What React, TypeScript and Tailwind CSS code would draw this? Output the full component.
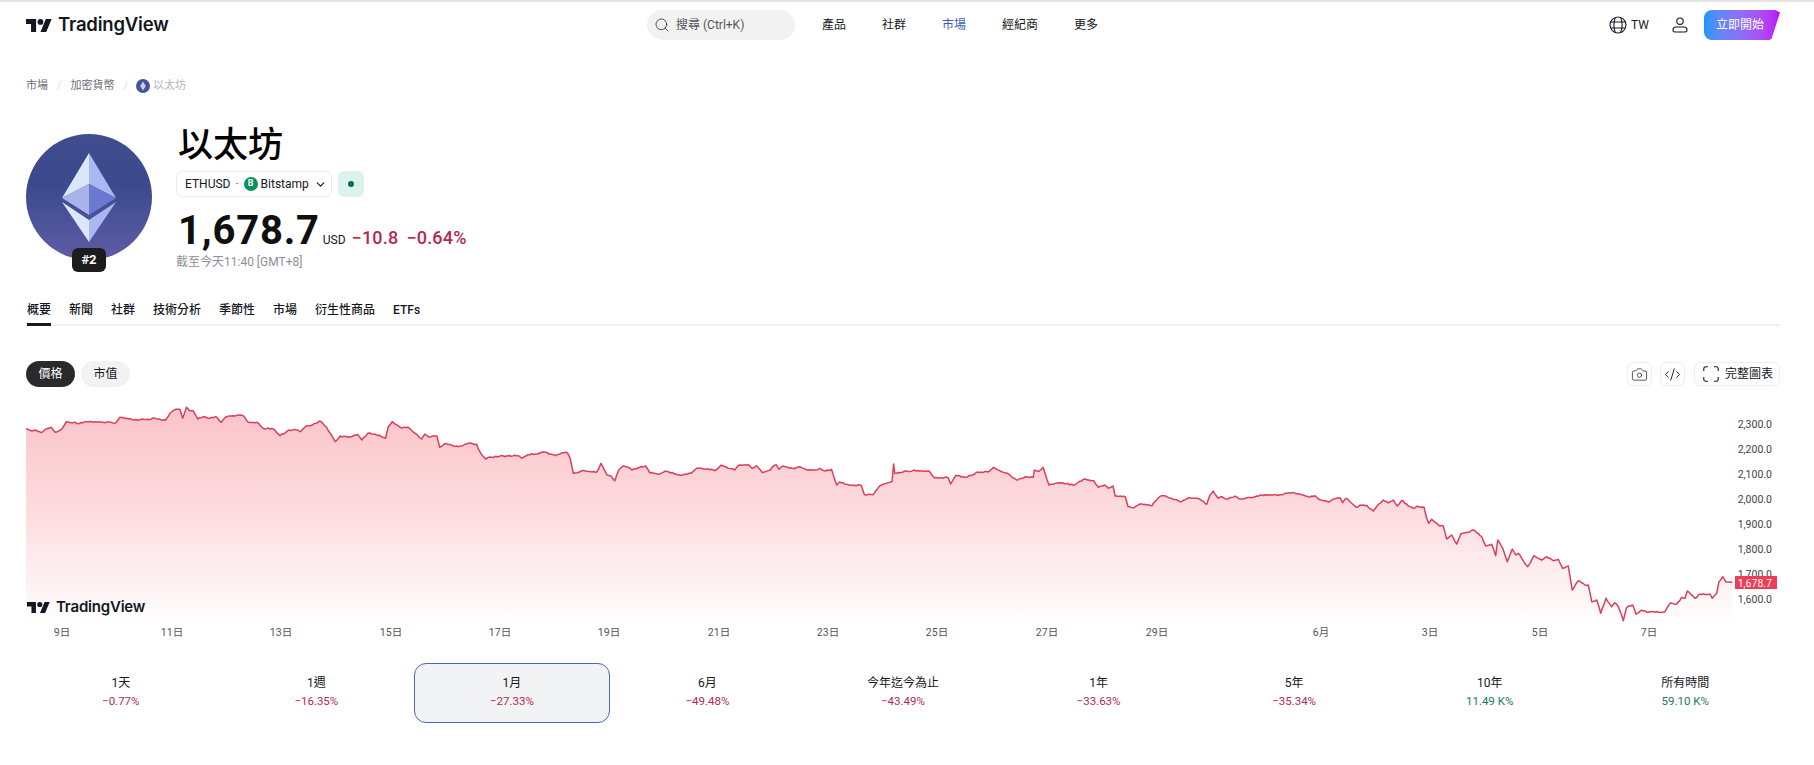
import { Camera, ChevronDown, CodeXml, Search } from 'lucide-react';

const sans = "font-['Roboto','Noto_Sans_CJK_TC',sans-serif]";

// traced from the reference: [offset x, x scale, offset y, points]
const traces: [number, number, number, number[]][] = [
  [0, 2.529, 390, [66,116,78,122,90,120,105,128,115,118,130,112,140,127,155,118,168,95,178,98,190,97,200,101,215,95,240,95,260,97,280,97,290,100,303,82,320,85,348,91,360,87,395,86,418,91,430,70,440,60,455,58,462,85,472,52,480,62,488,62,500,87,515,80,530,85,545,80,560,97,570,82,590,77,615,77,628,97,650,97,665,115,690,116,708,137,730,120,750,119,760,125,775,108,790,105,808,93,825,110,835,130,848,155,860,138,880,142,905,133,915,150,930,130,950,133,975,145,982,110,992,95,1000,103,1012,112,1035,114,1050,130,1066,147,1075,132,1085,141,1105,138,1112,172,1125,161,1160,170,1185,160,1205,163,1215,188,1228,207,1240,201,1280,198,1310,197,1320,205,1335,194,1355,192,1375,186,1405,197,1425,188,1435,188,1442,205,1450,250,1470,243,1510,245,1520,220,1535,255,1545,258,1555,272,1565,240]],
  [620, 2.529, 390, [8,228,20,232,30,240,50,232,65,228,75,248,100,252,115,243,150,255,180,250,195,234,230,238,240,242,255,226,290,240,300,226,325,224,335,235,345,227,360,248,380,240,385,232,395,224,402,238,410,229,440,236,455,230,475,240,495,240,505,235,520,243,535,238,548,285,555,276,580,286,610,286,618,314,640,314,655,290,675,280,688,275,692,222,695,250,720,243,780,242,795,263,830,263,836,282,850,256,875,262,905,246,930,246,945,232,965,245,985,254,1003,270,1025,260,1045,262,1048,240,1060,244,1070,232,1085,285,1110,278,1150,285,1172,268,1198,272,1210,292,1225,285,1235,295,1247,288,1252,318,1278,320,1285,350,1300,353,1315,342,1345,347,1365,320,1375,317,1395,325,1420,335,1440,323,1460,325]],
  [1200, 3, 400, [0,298,20,313,30,285,40,273,55,295,65,290,80,297,105,289,120,297,160,292,185,285,240,284,275,278,310,285,330,291,345,287,355,297,385,306,400,297,420,293,428,308,438,295,470,322,480,315,500,316,520,333,535,313,550,300,565,309,580,300,592,318,605,301,625,318,640,325,650,319,672,322,680,355,686,370,695,358,720,378,730,378,740,417,755,405,770,432,782,402,800,397,820,390,845,410,857,438,875,433,887,467,893,420,908,445,922,485,937,447,948,465,955,460,983,500,1002,467,1025,480,1040,470,1060,482,1075,478]],
  [1560, 3, 350, [8,655,25,648,37,720,55,692,75,705,85,705,95,755,110,750,122,790,138,745,155,770,165,758,175,770,190,812,200,772,218,765,228,792,245,780,265,787,300,787,315,785,330,760,350,762,365,742,375,745,382,723,405,745,420,732,450,732,457,745,470,730,477,695,488,680,497,695,517,697]],
];

const rawPts: [number, number][] = [];
traces.forEach(([ox, sx, oy, pts]) => {
  for (let i = 0; i < pts.length; i += 2) rawPts.push([ox + pts[i] / sx, oy + pts[i + 1] / 3]);
});

// fill long segments with a little tick noise so the line reads like price data
const linePts: string[] = [];
rawPts.forEach(([x, y], i) => {
  linePts.push(`${x.toFixed(1)},${y.toFixed(1)}`);
  const next = rawPts[i + 1];
  if (!next) return;
  const steps = Math.floor((next[0] - x) / 1.6);
  for (let s = 1; s < steps; s++) {
    const t = s / steps;
    const px = x + (next[0] - x) * t;
    const noise = Math.sin(px * 12.9898) * 43758.5453;
    const jitter = (noise - Math.floor(noise) - 0.5) * 1.3;
    linePts.push(`${px.toFixed(1)},${(y + (next[1] - y) * t + jitter).toFixed(1)}`);
  }
});
const linePath = linePts.join(' ');
const areaPath = `26,625 ${linePath} 1732,625`;

const priceTicks = [
  ['2,300.0', 428], ['2,200.0', 453], ['2,100.0', 478], ['2,000.0', 503],
  ['1,900.0', 528], ['1,800.0', 553], ['1,700.0', 578], ['1,600.0', 603],
] as const;

const timeTicks = [
  ['9日', 62], ['11日', 172], ['13日', 281], ['15日', 391], ['17日', 500], ['19日', 609], ['21日', 719],
  ['23日', 828], ['25日', 937], ['27日', 1047], ['29日', 1157], ['6月', 1321], ['3日', 1430], ['5日', 1540], ['7日', 1649],
] as const;

const ranges = [
  { label: '1天', value: '−0.77%' },
  { label: '1週', value: '−16.35%' },
  { label: '1月', value: '−27.33%', active: true },
  { label: '6月', value: '−49.48%' },
  { label: '今年迄今為止', value: '−43.49%' },
  { label: '1年', value: '−33.63%' },
  { label: '5年', value: '−35.34%' },
  { label: '10年', value: '11.49 K%', up: true },
  { label: '所有時間', value: '59.10 K%', up: true },
];

function TvMark({ className }: { className: string }) {
  return (
    <svg viewBox="0 4 36 18" className={className} fill="#131722">
      <path d="M14 22H7V11H0V4h14v18zM28 22h-8l7.5-18h8L28 22z" />
      <circle cx="20" cy="8" r="4" />
    </svg>
  );
}

function EthLogo() {
  return (
    <svg viewBox="0 0 126 126" className="w-[126px] h-[126px]">
      <defs>
        <linearGradient id="ethbg" x1="0" y1="0" x2="0" y2="1">
          <stop offset="0" stopColor="#404d8e" />
          <stop offset="0.4" stopColor="#3b4a8d" />
          <stop offset="1" stopColor="#5f5ca6" />
        </linearGradient>
      </defs>
      <circle cx="63" cy="63" r="63" fill="url(#ethbg)" />
      <path d="M63 19 36 64 63 50Z" fill="#dce6fb" />
      <path d="M63 19 90 64 63 50Z" fill="#a9b9ef" />
      <path d="M36 64 63 50 63 81Z" fill="#a8b4ea" />
      <path d="M90 64 63 50 63 81Z" fill="#6b7ad1" />
      <path d="M36 68 63 108 63 86Z" fill="#dce6fb" />
      <path d="M90 68 63 108 63 86Z" fill="#a9b9ef" />
    </svg>
  );
}

function GlobeIcon() {
  return (
    <svg viewBox="0 0 18 18" className="w-[18px] h-[18px]" fill="none" stroke="#131722" strokeWidth="1.1">
      <circle cx="9" cy="9" r="8" />
      <path d="M6.3 1.6C4.6 6 4.6 12 6.3 16.4M11.7 1.6c1.7 4.4 1.7 10.4 0 14.8M1.8 6h14.4M1.8 12h14.4" />
    </svg>
  );
}

function UserIcon() {
  return (
    <svg viewBox="0 0 16 16" className="w-[16px] h-[16px]" fill="none" stroke="#131722" strokeWidth="1.1">
      <circle cx="8" cy="4.2" r="3.2" />
      <path d="M4 10h8a3 3 0 0 1 3 3v.2a1.8 1.8 0 0 1-1.8 1.8H2.8A1.8 1.8 0 0 1 1 13.2V13a3 3 0 0 1 3-3Z" />
    </svg>
  );
}

function FullIcon() {
  return (
    <svg viewBox="0 0 16 16" className="w-[16px] h-[16px]" fill="none" stroke="#131722" strokeWidth="1.1">
      <path d="M5 .8H2.6A1.8 1.8 0 0 0 .8 2.6V5M11 .8h2.4a1.8 1.8 0 0 1 1.8 1.8V5M.8 11v2.4a1.8 1.8 0 0 0 1.8 1.8H5M15.2 11v2.4a1.8 1.8 0 0 1-1.8 1.8H11" />
    </svg>
  );
}

export default function App() {
  return (
    <div className={`${sans} min-h-[765px] bg-white text-[#131722] overflow-hidden`}>
      {/* Header */}
      <header className="h-[50px] border-t-2 border-[#e6e6e6] flex items-center pl-[26px] pb-[2px]">
        <TvMark className="w-[26px] h-[13px]" />
        <span className="ml-[6px] w-[110px] text-[18.5px] font-semibold tracking-[-0.2px] font-['Inter',sans-serif]">TradingView</span>

        <div className="ml-[479px] w-[148px] h-[30px] rounded-full bg-[#f2f2f2] flex items-center pl-[7px] text-[12px] text-[#555]">
          <Search className="w-[16px] h-[16px] text-[#333]" strokeWidth={1.3} />
          <span className="ml-[6px]">搜尋 (Ctrl+K)</span>
        </div>

        <nav className="ml-[27px] flex items-center gap-[36px] text-[12px]">
          <span>產品</span>
          <span>社群</span>
          <span className="text-[#3b5bb5]">市場</span>
          <span>經紀商</span>
          <span>更多</span>
        </nav>

        <div className="ml-[511px] flex items-center">
          <GlobeIcon />
          <span className="ml-[4px] text-[12px]">TW</span>
          <span className="ml-[23px]"><UserIcon /></span>
          <span className="ml-[16px] w-[76px] h-[30px] flex items-center justify-center pr-[4px] text-[12px] text-white rounded-l-lg bg-gradient-to-r from-[#1098f7] to-[#c000f5] [clip-path:polygon(0_0,94%_0,100%_8%,89%_96%,86%_100%,0_100%)]">
            立即開始
          </span>
        </div>
      </header>

      <main className="pl-[26px] pr-[34px]">
        {/* Breadcrumb */}
        <div className="mt-[28px] h-[16px] flex items-center text-[11px] text-[#6a6d78]">
          <span>市場</span>
          <span className="mx-[9px] text-[#e0e0e0]">/</span>
          <span>加密貨幣</span>
          <span className="ml-[9px] mr-[8px] text-[#e0e0e0]">/</span>
          <svg viewBox="0 0 14 14" className="w-[14px] h-[14px]">
            <circle cx="7" cy="7" r="7" fill="#4a5296" />
            <path d="M7 2.5 4.2 7 7 11.5 9.8 7Z" fill="#c4d0f5" />
          </svg>
          <span className="ml-[3px] text-[#b2b5be]">以太坊</span>
        </div>

        {/* Symbol hero */}
        <section className="mt-[40px] flex">
          <div className="relative w-[126px] h-[126px] shrink-0">
            <EthLogo />
            <span className="absolute left-[46px] top-[114px] w-[34px] h-[24px] rounded-md bg-[#1c1c1c] text-white text-[13px] font-bold flex items-center justify-center">#2</span>
          </div>
          <div className="ml-[24px] -mt-[8px]">
            <h1 className="h-[45px] ml-[2px] text-[35px] leading-[40px] font-medium text-black">以太坊</h1>
            <div className="flex items-center gap-[6px]">
              <div className="w-[156px] h-[26px] border border-[#ebebeb] rounded-md flex items-center pl-[8px] text-[12px]">
                <span>ETHUSD</span>
                <span className="mx-[5px] text-[#555]">·</span>
                <span className="w-[14px] h-[14px] rounded-full bg-[#0a8f63] text-white text-[9px] font-bold flex items-center justify-center">B</span>
                <span className="ml-[3px]">Bitstamp</span>
                <ChevronDown className="ml-[5px] w-[13px] h-[13px]" strokeWidth={2} />
              </div>
              <div className="w-[26px] h-[26px] rounded-md bg-[#daf3ec] flex items-center justify-center">
                <span className="w-[6px] h-[6px] rounded-full bg-[#0b6b50]" />
              </div>
            </div>
            <div className="mt-[14px] ml-[2px] h-[40px] flex items-baseline">
              <span className="text-[40px] leading-[40px] font-bold tracking-[0.8px] text-[#0f0f0f]">1,678.7</span>
              <span className="ml-[3px] text-[12px]">USD</span>
              <span className="ml-[6px] text-[18px] font-medium text-[#b22a50] tracking-[0.2px]">−10.8</span>
              <span className="ml-[8px] text-[18px] font-medium text-[#b22a50] tracking-[0.2px]">−0.64%</span>
            </div>
            <div className="mt-[2px] text-[12px] leading-[18px] text-[#8c8f98]">截至今天11:40 [GMT+8]</div>
          </div>
        </section>

        {/* Tabs */}
        <nav className="mt-[28px] h-[27px] border-b-2 border-[#f0f0f0] flex gap-[18px] pl-[1px] text-[12px] font-medium">
          <span className="h-[27px] border-b-[3px] border-[#1a1a1a] pt-[2px]">概要</span>
          <span className="pt-[2px]">新聞</span>
          <span className="pt-[2px]">社群</span>
          <span className="pt-[2px]">技術分析</span>
          <span className="pt-[2px]">季節性</span>
          <span className="pt-[2px]">市場</span>
          <span className="pt-[2px]">衍生性商品</span>
          <span className="pt-[2px]">ETFs</span>
        </nav>

        {/* Chart toolbar */}
        <div className="mt-[35px] h-[26px] flex items-center text-[12px]">
          <span className="w-[49px] h-[26px] rounded-full bg-[#2a2a2a] text-white flex items-center justify-center">價格</span>
          <span className="ml-[6px] w-[49px] h-[26px] rounded-full bg-[#f2f2f2] flex items-center justify-center">市值</span>
          <div className="ml-auto flex gap-[8px]">
            <span className="w-[25px] h-[24px] border border-[#eeeeee] rounded-md flex items-center justify-center">
              <Camera className="w-[17px] h-[17px]" strokeWidth={1} />
            </span>
            <span className="w-[25px] h-[24px] border border-[#eeeeee] rounded-md flex items-center justify-center">
              <CodeXml className="w-[17px] h-[17px]" strokeWidth={1.3} />
            </span>
            <span className="ml-[1px] w-[86px] h-[24px] border border-[#eeeeee] rounded-md flex items-center pl-[8px] gap-[6px]">
              <FullIcon />
              完整圖表
            </span>
          </div>
        </div>

        {/* Chart */}
        <div className="relative mt-[11px] h-[246px]">
          <svg viewBox="26 398 1754 246" className="block w-[1754px] h-[246px]">
            <defs>
              <linearGradient id="area" gradientUnits="userSpaceOnUse" x1="0" y1="410" x2="0" y2="625">
                <stop offset="0" stopColor="#fbc4c9" />
                <stop offset="0.5" stopColor="#fddde0" />
                <stop offset="1" stopColor="#ffffff" />
              </linearGradient>
            </defs>
            <polygon points={areaPath} fill="url(#area)" />
            <polyline points={linePath} fill="none" stroke="#d8405c" strokeWidth="1.5" strokeLinejoin="round" />
            {priceTicks.map(([t, y]) => (
              <text key={t} x="1772" y={y} textAnchor="end" fontSize="10.5" fill="#444">{t}</text>
            ))}
            {timeTicks.map(([t, x]) => (
              <text key={t} x={x} y="636" textAnchor="middle" fontSize="10.5" fill="#555">{t}</text>
            ))}
            <rect x="1735" y="576" width="42" height="13" fill="#ee3d58" />
            <text x="1772" y="586.5" textAnchor="end" fontSize="10.5" fill="#fff">1,678.7</text>
          </svg>
          <div className="absolute left-[1px] top-[198px] flex items-center">
            <TvMark className="w-[23px] h-[11.5px]" />
            <span className="ml-[6px] text-[15px] font-semibold tracking-[-0.2px] font-['Inter',sans-serif]">TradingView</span>
          </div>
        </div>

        {/* Performance row */}
        <div className="mt-[19px] -ml-[3px] w-[1760px] grid grid-cols-9 text-center">
          {ranges.map((r) => (
            <div
              key={r.label}
              className={`h-[60px] rounded-xl border flex flex-col items-center pt-[10px] ${r.active ? 'bg-[#f2f3f5] border-[#4a66b8]' : 'border-transparent'}`}
            >
              <span className="text-[12px] leading-[18px]">{r.label}</span>
              <span className={`text-[11.5px] leading-[18px] ${r.up ? 'text-[#1b7a5c]' : 'text-[#b22a50]'}`}>{r.value}</span>
            </div>
          ))}
        </div>
      </main>
    </div>
  );
}
